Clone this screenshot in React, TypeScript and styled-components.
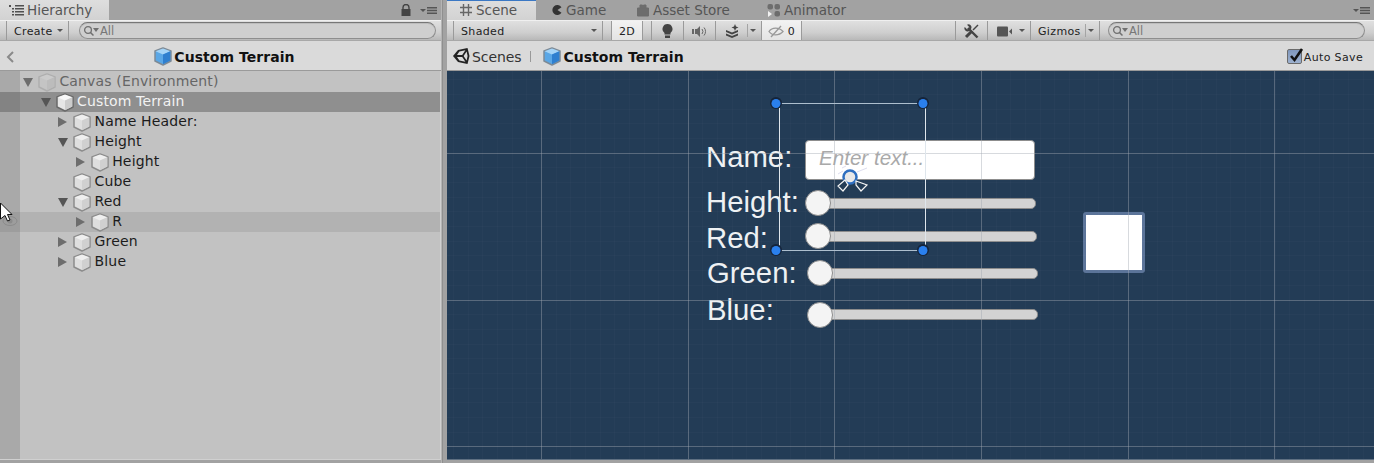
import React from "react";
import styled, { createGlobalStyle } from "styled-components";

const Global = createGlobalStyle`
  html, body { margin: 0; padding: 0; background: #a2a2a2; }
  body { font-family: "DejaVu Sans", Verdana, sans-serif; overflow: hidden; }
  * { box-sizing: border-box; }
`;

const Root = styled.div`
  position: relative; display: flex; width: 1374px; height: 463px; overflow: hidden; background: #a2a2a2;
`;
const Panel = styled.section<{ $w?: number }>`
  display: flex; flex-direction: column; height: 460px;
  ${(p) => (p.$w ? `width: ${p.$w}px; flex: none;` : "flex: 1; min-width: 0;")}
`;
const Divider = styled.div`
  width: 6px; flex: none; background: linear-gradient(to right, #b4b4b4 0, #b4b4b4 1px, #8f8f8f 1px, #8f8f8f 2px, #a2a2a2 2px);
`;
const TabBar = styled.div`
  display: flex; align-items: stretch; height: 20px; flex: none; background: #a2a2a2; color: #4a4a4a; position: relative;
`;
const Tab = styled.div<{ $active?: boolean; $w: number; $pad?: number; $blue?: boolean }>`
  width: ${(p) => p.$w}px; display: flex; align-items: center; gap: 3px; padding-left: ${(p) => p.$pad ?? 15}px;
  font-size: 13.5px; white-space: nowrap; color: #555;
  ${(p) => p.$active && `background: linear-gradient(#dedede, #d2d2d2);`}
  ${(p) => p.$blue && `box-shadow: inset 0 1px 0 #3b78c4;`}
  svg { flex: none; }
`;
const TabTools = styled.div`
  margin-left: auto; display: flex; align-items: center; gap: 9px; padding-right: 4px; color: #4a4a4a;
`;
const Toolbar = styled.div`
  display: flex; align-items: stretch; height: 21px; flex: none; background: linear-gradient(#e0e0e0, #cfcfcf 60%, #b8b8b8);
  border-top: 1px solid #f0f0f0; border-bottom: 1px solid #a8a8a8; font-size: 11px; letter-spacing: 0.35px; color: #222;
`;
const ToolButton = styled.div<{ $w: number; $ml?: number; $light?: boolean; $center?: boolean }>`
  width: ${(p) => p.$w}px; margin-left: ${(p) => p.$ml ?? 0}px; flex: none; display: flex; align-items: center;
  justify-content: ${(p) => (p.$center ? "center" : "flex-start")}; gap: 4px; padding-top: 1px;
  padding-left: ${(p) => (p.$center ? 0 : 7)}px; border-right: 1px solid #9a9a9a; border-left: 1px solid #9a9a9a; margin-right: -1px;
  ${(p) => p.$light && `background: linear-gradient(#f2f2f2, #e4e4e4);`}
  position: relative;
`;
const Caret = styled.span<{ $right?: number }>`
  position: absolute; right: ${(p) => p.$right ?? 5}px; top: 8px; width: 0; height: 0;
  border-left: 3px solid transparent; border-right: 3px solid transparent; border-top: 3px solid #555;
`;
const Sep = styled.span`
  position: absolute; right: 13px; top: 3px; height: 13px; width: 1px; background: #a4a4a4;
`;
const Search = styled.div<{ $ml: number; $w: number }>`
  margin: 1px 0 1px ${(p) => p.$ml}px; width: ${(p) => p.$w}px; height: 17px; flex: none; border-radius: 9px;
  border: 1px solid #8e8e8e; border-top-color: #777; background: #cfcfcf; display: flex; align-items: center; padding: 1px 0 0 3px;
  color: #777; font-size: 11.5px; letter-spacing: 0; box-shadow: inset 0 1px 0 #bdbdbd;
`;
const Breadcrumb = styled.div<{ $center?: boolean }>`
  position: relative; height: 30px; flex: none; display: flex; align-items: center; background: #dadada;
  border-bottom: 1px solid #9a9a9a; justify-content: ${(p) => (p.$center ? "center" : "flex-start")};
  padding: 1px 0 0 ${(p) => (p.$center ? 8 : 5)}px; color: #111;
`;
const BackChevron = styled.span`
  position: absolute; left: 6px; top: 10px; color: #8a8a8a; display: flex;
`;
const Title = styled.span`
  font-weight: 700; font-size: 14px; letter-spacing: 0.05px; margin-left: 2px; padding-top: 1px; white-space: nowrap;
`;
const Crumb = styled.span`
  font-size: 14px; color: #333; letter-spacing: -0.1px; margin-left: 2px; padding: 1px 10px 0 0; margin-right: 12px; position: relative;
  &::after { content: ""; position: absolute; right: 0; top: 3px; height: 11px; width: 1px; background: #999; }
`;
const AutoSave = styled.label`
  position: absolute; right: 11px; top: 7px; display: flex; align-items: center; gap: 2px; font-size: 11px; letter-spacing: 0.35px; color: #222;
  span:last-child { padding-top: 3px; }
`;
const Check = styled.span`
  width: 15px; height: 15px; border-radius: 2px; background: linear-gradient(#7f97bd, #9db1cf); border: 1px solid #6b6b6b; position: relative; display: block;
  svg { position: absolute; left: 1px; top: -3px; }
`;
const Tree = styled.div`
  flex: 1; min-height: 0; padding-top: 1px; position: relative;
  background: linear-gradient(to right, #a9a9a9 20px, #c2c2c2 20px);
  border-right: 1px solid #d0d0d0; border-bottom: 1px solid #d0d0d0;
`;
const Row = styled.div<{ $depth: number; $state?: "selected" | "hover"; $dim?: boolean }>`
  position: relative; height: 20px; display: flex; align-items: center; padding: 0 0 0 ${(p) => 21 + p.$depth * 17.6}px;
  font-size: 14px; letter-spacing: 0.15px; color: ${(p) => (p.$dim ? "#666" : p.$state === "selected" ? "#f2f2f2" : "#1c1c1c")};
  background: ${(p) =>
    p.$state === "selected"
      ? "linear-gradient(to right, #838383 20px, #8f8f8f 20px)"
      : p.$state === "hover"
      ? "linear-gradient(to right, #9d9d9d 20px, #b2b2b2 20px)"
      : "transparent"};
`;
const Arrow = styled.span<{ $open?: boolean; $none?: boolean; $dim?: boolean }>`
  width: 17px; flex: none; height: 12px; display: flex; align-items: center; justify-content: flex-start;
  &::before {
    content: ""; display: ${(p) => (p.$none ? "none" : "block")}; width: 0; height: 0; margin-left: 2px;
    ${(p) =>
      p.$open
        ? `border-left: 5.5px solid transparent; border-right: 5.5px solid transparent; border-top: 9px solid ${p.$dim ? "#6d6d6d" : "#555"};`
        : `border-top: 5.5px solid transparent; border-bottom: 5.5px solid transparent; border-left: 9px solid #6d6d6d; margin-left: 2px;`}
  }
`;
const RowLabel = styled.span`
  margin: -2px 0 0 3.4px; white-space: nowrap;
`;
const Scene = styled.div`
  position: relative; flex: 1; min-height: 0; overflow: hidden; background: #233c56; border-bottom: 1px solid #5f7082;
`;
const GridLayer = styled.svg`
  position: absolute; left: 0; top: 0; width: 100%; height: 100%; pointer-events: none;
`;
const SceneLabel = styled.div<{ $x: number; $y: number }>`
  position: absolute; left: ${(p) => p.$x - 447}px; top: ${(p) => p.$y - 71}px; font: 29.3px/34px "Liberation Sans", Arial, sans-serif; color: #eef1f3; white-space: nowrap;
`;
const InputField = styled.div`
  position: absolute; left: ${805 - 447}px; top: ${140 - 71}px; width: 230px; height: 40px; background: #fff; border: 1px solid #8d8d8d; border-radius: 4px;
  font: italic 20.6px/34px "Liberation Sans", Arial, sans-serif; color: #a9a9a9; padding-left: 13px;
`;
const Track = styled.div<{ $x: number; $y: number; $r: number }>`
  position: absolute; left: ${(p) => p.$x - 447}px; top: ${(p) => p.$y - 71}px; width: ${(p) => p.$r - p.$x}px; height: 11px;
  background: #d3d3d3; border: 1px solid #8c8c8c; border-radius: 5px;
`;
const Knob = styled.div<{ $x: number; $y: number }>`
  position: absolute; left: ${(p) => p.$x - 447 - 13}px; top: ${(p) => p.$y - 71 - 13}px; width: 26px; height: 26px; border-radius: 50%;
  background: #f4f4f4; border: 1px solid #8c8c8c;
`;
const Swatch = styled.div`
  position: absolute; left: ${1083 - 447}px; top: ${212 - 71}px; width: 62px; height: 61px; background: #fff; border: 3px solid #5b7499; border-radius: 3px;
`;
const Cursor = styled.svg`
  position: absolute; left: 0; top: 202px;
`;
const Eye = styled.svg`
  position: absolute; left: 2px; top: 214px;
`;
const LeadIcon = styled.svg`
  flex: none; margin-left: 2px;
`;

const CubeIcon: React.FC<{ blue?: boolean; dim?: boolean; selected?: boolean }> = ({ blue, dim, selected }) => {
  const top = blue ? "#a5d4f7" : selected ? "#f8f8f8" : dim ? "#cbcbcb" : "#efefef";
  const left = blue ? "#5aa7e6" : selected ? "#e6e6e6" : dim ? "#c4c4c4" : "#dedede";
  const right = blue ? "#2f7fcf" : selected ? "#cccccc" : dim ? "#bcbcbc" : "#d0d0d0";
  const stroke = blue ? "#7d8a96" : selected ? "#6a6a6a" : dim ? "#aeaeae" : "#8c8c8c";
  return (
    <svg width="18" height="19" viewBox="0 0 18 19" style={{ flex: "none" }}>
      <path d="M9 1 17 4 17 14 9 18 1 14 1 4Z" fill={left} stroke={stroke} strokeWidth="1.5" strokeLinejoin="round" />
      <path d="M9 1.500 16.500 4.200 9 7.500 1.500 4.200Z" fill={top} />
      <path d="M9 7.500 16.300 4.200 16.300 13.600 9 17.200Z" fill={right} />
    </svg>
  );
};
const MenuIcon = () => (
  <svg width="17" height="9" viewBox="0 0 17 9">
    <path d="M0 3h6L3 6z" fill="#555" />
    <path d="M7 1h10v1.4H7zM7 3.8h10v1.4H7zM7 6.6h10V8H7z" fill="#555" />
  </svg>
);
const SearchGlyph = () => (
  <svg width="17" height="12" viewBox="0 0 17 12" style={{ flex: "none" }}>
    <circle cx="5" cy="5" r="3.4" fill="none" stroke="#707070" strokeWidth="1.3" />
    <path d="M7.5 7.5 10.5 10.5" stroke="#707070" strokeWidth="1.5" />
    <path d="M10 3h6l-3 4z" fill="#707070" />
  </svg>
);
const UnityLogo = () => (
  <svg width="18" height="18" viewBox="0 0 18 18" style={{ flex: "none" }}>
    <path d="M1 9 6 3 15.500 1 17.500 9 15.500 17 6 15Z" fill="#222" />
    <path d="M5 8H10.200L13.400 3.200 7.400 4.600ZM5 10H10.200L13.400 14.800 7.400 13.400ZM11.600 9 14.600 4.500 15.600 9 14.600 13.500Z" fill="#dadada" />
  </svg>
);

type Node = { name: string; depth: number; arrow?: "open" | "closed"; state?: "selected" | "hover"; dim?: boolean };
const nodes: Node[] = [
  { name: "Canvas (Environment)", depth: 0, arrow: "open", dim: true },
  { name: "Custom Terrain", depth: 1, arrow: "open", state: "selected" },
  { name: "Name Header:", depth: 2, arrow: "closed" },
  { name: "Height", depth: 2, arrow: "open" },
  { name: "Height", depth: 3, arrow: "closed" },
  { name: "Cube", depth: 2 },
  { name: "Red", depth: 2, arrow: "open" },
  { name: "R", depth: 3, arrow: "closed", state: "hover" },
  { name: "Green", depth: 2, arrow: "closed" },
  { name: "Blue", depth: 2, arrow: "closed" },
];
const sliders = [
  { label: "Height:", lx: 706, ly: 185, kx: 818, ky: 203, tx: 822, ty: 198, r: 1036 },
  { label: "Red:", lx: 706, ly: 221, kx: 818, ky: 236, tx: 822, ty: 231, r: 1037 },
  { label: "Green:", lx: 707, ly: 256, kx: 820, ky: 273, tx: 824, ty: 268, r: 1038 },
  { label: "Blue:", lx: 707, ly: 293, kx: 820, ky: 315, tx: 824, ty: 309, r: 1038 },
];
const vMajor = [541.5, 688.2, 834.8, 981.5, 1128.2, 1274.9].map((v) => v - 447);
const hMajor = [153.3, 300, 446.7].map((v) => v - 71);
const vMinor = Array.from({ length: 70 }, (_, i) => 541.5 - 14.67 * 6 + 14.67 * i - 447);
const hMinor = Array.from({ length: 30 }, (_, i) => 153.3 - 14.67 * 5 + 14.67 * i - 71);
const handles = [
  [776, 103],
  [923, 103],
  [776, 250],
  [923, 250],
];

export default function App() {
  return (
    <Root>
      <Global />
      <Panel $w={441}>
        <TabBar>
          <Tab $active $w={109} $pad={9}>
            <svg width="15" height="11" viewBox="0 0 15 11">
              <path d="M0 0h2v2H0zM3 3h2v1.6H3zM3 6h2v1.6H3zM3 9h2v1.6H3zM6 0h9v1.4H6zM6 3h9v1.4H6zM6 6h9v1.4H6zM6 9h9v1.4H6z" fill="#505050" />
            </svg>
            Hierarchy
          </Tab>
          <TabTools>
            <svg width="10" height="12" viewBox="0 0 10 12">
              <path d="M2 5V3.5a3 3 0 0 1 6 0V5" fill="none" stroke="#444" strokeWidth="1.4" />
              <rect x="0.5" y="5" width="9" height="7" fill="#444" />
            </svg>
            <MenuIcon />
          </TabTools>
        </TabBar>
        <Toolbar>
          <ToolButton $w={63} $ml={6}>
            Create
            <Caret />
          </ToolButton>
          <Search $ml={11} $w={357}>
            <SearchGlyph />
            All
          </Search>
        </Toolbar>
        <Breadcrumb $center>
          <BackChevron>
            <svg width="8" height="12" viewBox="0 0 8 12">
              <path d="M7 1 2 6l5 5" fill="none" stroke="#8a8a8a" strokeWidth="2" />
            </svg>
          </BackChevron>
          <CubeIcon blue />
          <Title>Custom Terrain</Title>
        </Breadcrumb>
        <Tree>
          {nodes.map((n, i) => (
            <Row key={i} $depth={n.depth} $state={n.state} $dim={n.dim}>
              <Arrow $open={n.arrow === "open"} $none={!n.arrow} $dim={n.dim} />
              <CubeIcon dim={n.dim} selected={n.state === "selected"} />
              <RowLabel>{n.name}</RowLabel>
            </Row>
          ))}
        </Tree>
      </Panel>
      <Divider />
      <Panel>
        <TabBar>
          <Tab $active $blue $w={89} $pad={12}>
            <svg width="14" height="14" viewBox="0 0 14 14">
              <path d="M4.500 1v12M9.500 1v12M1 4.500h12M1 9.500h12" stroke="#666" strokeWidth="1.4" />
            </svg>
            Scene
          </Tab>
          <Tab $w={85}>
            <svg width="12" height="12" viewBox="0 0 12 12">
              <path d="M10.500 3.200A5 5 0 1 0 10.500 8.800L6.500 6Z" fill="#333" />
            </svg>
            Game
          </Tab>
          <Tab $w={131}>
            <svg width="14" height="14" viewBox="0 0 14 14">
              <path d="M1.500 5h11v8h-11zM4 5V2h2.500v3M7.500 5V2H10v3" fill="#6d6d6d" stroke="#6d6d6d" strokeWidth="1" />
            </svg>
            Asset Store
          </Tab>
          <Tab $w={130}>
            <svg width="14" height="14" viewBox="0 0 14 14">
              <rect x="0.500" y="1" width="5.500" height="5.500" rx="2" fill="#6d6d6d" />
              <rect x="7.500" y="1" width="5.500" height="5.500" rx="2" fill="#6d6d6d" />
              <rect x="7.500" y="8" width="5.500" height="5.500" rx="2" fill="#6d6d6d" />
              <path d="M1 8l4 3-4 3z" fill="#f2f2f2" />
            </svg>
            Animator
          </Tab>
          <TabTools>
            <MenuIcon />
          </TabTools>
        </TabBar>
        <Toolbar>
          <ToolButton $w={150} $ml={6}>
            Shaded
            <Caret />
          </ToolButton>
          <ToolButton $w={32} $ml={9} $light $center>
            2D
          </ToolButton>
          <ToolButton $w={33} $ml={9} $center>
            <svg width="11" height="14" viewBox="0 0 11 14">
              <path d="M5.500 0a5 5 0 0 1 3 9v1.500h-6V9a5 5 0 0 1 3-9zM3 11.500h5V14H3z" fill="#444" />
            </svg>
          </ToolButton>
          <ToolButton $w={33} $center>
            <svg width="15" height="11" viewBox="0 0 15 11">
              <path d="M0 3h2v5H0zM3 3h2l3-3v11L5 8H3z" fill="#666" />
              <path d="M10 3a4 4 0 0 1 0 5M12 1.500a6 6 0 0 1 0 8" fill="none" stroke="#666" strokeWidth="1" />
            </svg>
          </ToolButton>
          <ToolButton $w={47}>
            <LeadIcon width="16" height="14" viewBox="0 0 16 14">
              <path d="M1 6l6 2.500 6-2.500v2l-6 2.500-6-2.500zM1 9.500l6 2.500 6-2.500v2L7 14l-6-2.500z" fill="#444" />
              <path d="M10 0l1 2.500 2.500 1-2.500 1-1 2.500-1-2.500-2.500-1 2.500-1z" fill="#444" />
            </LeadIcon>
            <Sep />
            <Caret />
          </ToolButton>
          <ToolButton $w={41} $light $center>
            <svg width="16" height="13" viewBox="0 0 16 13">
              <path d="M1 6.500c3-4.500 10-4.500 14 0-4 4.500-11 4.500-14 0z" fill="none" stroke="#999" strokeWidth="1.300" />
              <path d="M3 12 13 1" stroke="#999" strokeWidth="1.300" />
            </svg>
            <span>0</span>
          </ToolButton>
          <ToolButton $w={33} $ml={154} $center>
            <svg width="15" height="15" viewBox="0 0 15 15">
              <path d="M4 4 13.500 13.500" stroke="#444" strokeWidth="2.400" />
              <path d="M0.800 3 3.200 5.400 5.400 3.200 3 0.800A3 3 0 0 1 7 5L5 7A3 3 0 0 1 0.800 3Z" fill="#444" />
              <path d="M14 1 9 6" stroke="#444" strokeWidth="1.500" />
              <path d="M8 7 2 13" stroke="#444" strokeWidth="3" />
            </svg>
          </ToolButton>
          <ToolButton $w={44}>
            <LeadIcon width="16" height="11" viewBox="0 0 16 11">
              <rect x="0" y="0.500" width="11" height="10" rx="1" fill="#555" />
              <path d="M12 5.500l3-3v6z" fill="#555" />
            </LeadIcon>
            <Caret />
          </ToolButton>
          <ToolButton $w={70}>
            Gizmos
            <Sep />
            <Caret />
          </ToolButton>
          <Search $ml={9} $w={257}>
            <SearchGlyph />
            All
          </Search>
        </Toolbar>
        <Breadcrumb>
          <UnityLogo />
          <Crumb>Scenes</Crumb>
          <CubeIcon blue />
          <Title>Custom Terrain</Title>
          <AutoSave>
            <Check>
              <svg width="15" height="16" viewBox="0 0 15 16">
                <path d="M2 9l3.500 4L13 2" fill="none" stroke="#111" strokeWidth="2.600" />
              </svg>
            </Check>
            <span>Auto Save</span>
          </AutoSave>
        </Breadcrumb>
        <Scene>
          <SceneLabel $x={706} $y={140}>Name:</SceneLabel>
          <InputField>Enter text...</InputField>
          {sliders.map((s) => (
            <React.Fragment key={s.label}>
              <SceneLabel $x={s.lx} $y={s.ly}>{s.label}</SceneLabel>
              <Track $x={s.tx} $y={s.ty} $r={s.r} />
              <Knob $x={s.kx} $y={s.ky} />
            </React.Fragment>
          ))}
          <Swatch />
          <GridLayer>
            {vMinor.map((x, i) => (
              <line key={i} x1={Math.floor(x) + 0.5} x2={Math.floor(x) + 0.5} y1={0} y2={400} stroke="#fff" strokeOpacity="0.02" />
            ))}
            {hMinor.map((y, i) => (
              <line key={i} x1={0} x2={930} y1={Math.floor(y) + 0.5} y2={Math.floor(y) + 0.5} stroke="#fff" strokeOpacity="0.02" />
            ))}
            {vMajor.map((x, i) => (
              <line key={i} x1={Math.floor(x) + 0.5} x2={Math.floor(x) + 0.5} y1={0} y2={400} stroke="#a0a8b0" strokeOpacity="0.42" />
            ))}
            {hMajor.map((y, i) => (
              <line key={i} x1={0} x2={930} y1={Math.floor(y) + 0.5} y2={Math.floor(y) + 0.5} stroke="#a0a8b0" strokeOpacity="0.42" />
            ))}
            <path d="M329 32.500H476M329 179.500H476" stroke="#aebfce" />
            <path d="M332.500 32V179M478.500 32V179" stroke="#dfe6ec" />
            {handles.map(([x, y], i) => (
              <g key={i}>
                <circle cx={x - 447} cy={y - 71} r="6" fill="#15243a" />
                <circle cx={x - 447} cy={y - 70.500} r="4.500" fill="#2a80ee" />
              </g>
            ))}
            <g transform="translate(403 106)">
              <circle cx="0" cy="0" r="6.500" fill="#e8e8e8" stroke="#2f6fc0" strokeWidth="2.500" />
              <path d="M-12 -3 -7 -6M7 -5 17 -9M-8 -9 -4 -11" stroke="#dde" strokeWidth="1" />
              <path d="M-5 3-12 9-7 14-2 8ZM6 4 17 8 11 14 6 8Z" fill="#233c56" stroke="#f4f4f4" strokeWidth="1.200" />
            </g>
          </GridLayer>
        </Scene>
      </Panel>
      <Eye width="17" height="14" viewBox="0 0 17 14">
        <ellipse cx="8" cy="7" rx="7" ry="4.500" fill="none" stroke="#8b8b8b" />
        <circle cx="8" cy="7" r="2.500" fill="#8b8b8b" />
      </Eye>
      <Cursor width="14" height="20" viewBox="0 0 14 20">
        <path d="M0.500 1 12 12.500H7.500L10 18l-2.500 1L5 13.500 0.500 17Z" fill="#fff" stroke="#111" strokeWidth="1" />
      </Cursor>
    </Root>
  );
}
